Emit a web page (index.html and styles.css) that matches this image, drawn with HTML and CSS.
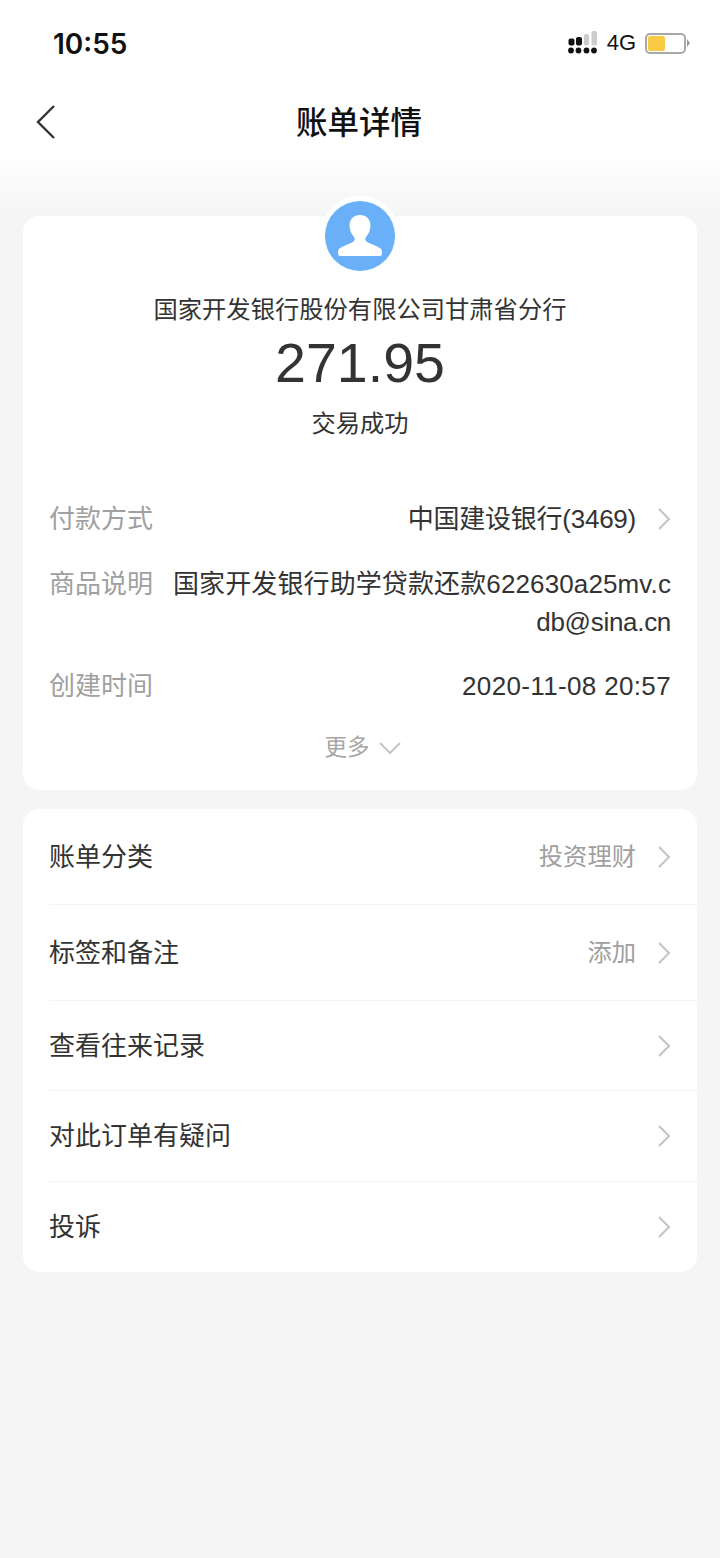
FILE: index.html
```html
<!DOCTYPE html>
<html lang="zh-CN">
<head>
  <meta charset="UTF-8">
  <meta name="viewport" content="width=device-width, initial-scale=1.0">
  <title>账单详情</title>
  <link rel="stylesheet" href="styles.css">
</head>
<body>
  <div class="status-bar">
    <span class="time">10:55</span>
    <div class="status-right">
      <svg class="signal" width="30" height="24" viewBox="0 0 30 24">
        <rect x="0.500" y="7.500" width="6" height="7" rx="2" fill="#111"/>
        <rect x="8" y="6" width="6" height="8.500" rx="2" fill="#111"/>
        <rect x="16" y="3" width="5" height="11.500" rx="2" fill="#ccc"/>
        <rect x="23.500" y="0" width="5.500" height="14.500" rx="2" fill="#ccc"/>
        <circle cx="3" cy="19.500" r="2.900" fill="#111"/>
        <circle cx="10.500" cy="19.500" r="2.900" fill="#111"/>
        <circle cx="18.500" cy="19.500" r="2.900" fill="#111"/>
        <circle cx="26" cy="19.500" r="2.900" fill="#111"/>
      </svg>
      <span class="net">4G</span>
      <div class="battery"><div class="battery-level"></div></div>
      <div class="battery-tip"></div>
    </div>
  </div>

  <div class="nav-bar">
    <svg class="back" width="22" height="36" viewBox="0 0 22 36">
      <path d="M19 2 L3 18 L19 34" fill="none" stroke="#333" stroke-width="2.400"/>
    </svg>
    <h1 class="nav-title">账单详情</h1>
  </div>

  <div class="card card-main">
    <div class="avatar">
      <svg width="70" height="70" viewBox="0 0 70 70">
        <circle cx="35" cy="35" r="35" fill="#6ab0f8"/>
        <path d="M35 14c-6.500 0-10.500 4.500-10.500 10.500 0 4.500 2 9 4.500 11.500 1 1.500 1 3.500-.5 4.500-3.500 2.500-10 4-14 7-1 1-1.500 2.500-1.500 5 0 1.500 1 2.500 2.500 2.500h39c1.500 0 2.500-1 2.500-2.500 0-2.500-.5-4-1.500-5-4-3-10.500-4.500-14-7-1.500-1-1.500-3-.5-4.500 2.500-2.500 4.500-7 4.500-11.500C45.500 18.500 41.500 14 35 14z" fill="#fff"/>
      </svg>
    </div>
    <div class="payee">国家开发银行股份有限公司甘肃省分行</div>
    <div class="amount">271.95</div>
    <div class="state">交易成功</div>

    <div class="detail-row detail-pay">
      <span class="detail-label">付款方式</span>
      <span class="detail-value detail-bank">中国建设银行(3469)</span>
      <svg class="chevron" width="14" height="24" viewBox="0 0 14 24"><path d="M2 2 L12 12 L2 22" fill="none" stroke="#c6c6c6" stroke-width="2.200"/></svg>
    </div>
    <div class="detail-row detail-desc">
      <span class="detail-label">商品说明</span>
      <span class="detail-value detail-long">国家开发银行助学贷款还款622630a25mv.c<span class="detail-tail">db@sina.cn</span></span>
    </div>
    <div class="detail-row detail-time">
      <span class="detail-label">创建时间</span>
      <span class="detail-value detail-date">2020-11-08 20:57</span>
    </div>
    <div class="more">
      <span>更多</span>
      <svg width="24" height="14" viewBox="0 0 24 14"><path d="M2 2 L12 12 L22 2" fill="none" stroke="#c6c6c6" stroke-width="2"/></svg>
    </div>
  </div>

  <div class="card card-list">
    <div class="list-row row-tall">
      <span class="row-title">账单分类</span>
      <span class="row-value">投资理财</span>
      <svg class="chevron" width="14" height="24" viewBox="0 0 14 24"><path d="M2 2 L12 12 L2 22" fill="none" stroke="#c6c6c6" stroke-width="2.200"/></svg>
    </div>
    <div class="list-row row-tall">
      <span class="row-title">标签和备注</span>
      <span class="row-value">添加</span>
      <svg class="chevron" width="14" height="24" viewBox="0 0 14 24"><path d="M2 2 L12 12 L2 22" fill="none" stroke="#c6c6c6" stroke-width="2.200"/></svg>
    </div>
    <div class="list-row">
      <span class="row-title">查看往来记录</span>
      <svg class="chevron" width="14" height="24" viewBox="0 0 14 24"><path d="M2 2 L12 12 L2 22" fill="none" stroke="#c6c6c6" stroke-width="2.200"/></svg>
    </div>
    <div class="list-row">
      <span class="row-title">对此订单有疑问</span>
      <svg class="chevron" width="14" height="24" viewBox="0 0 14 24"><path d="M2 2 L12 12 L2 22" fill="none" stroke="#c6c6c6" stroke-width="2.200"/></svg>
    </div>
    <div class="list-row">
      <span class="row-title">投诉</span>
      <svg class="chevron" width="14" height="24" viewBox="0 0 14 24"><path d="M2 2 L12 12 L2 22" fill="none" stroke="#c6c6c6" stroke-width="2.200"/></svg>
    </div>
  </div>
</body>
</html>
```

FILE: styles.css
```css
* {
  margin: 0;
  padding: 0;
  box-sizing: border-box;
}

html, body {
  height: 100%;
}

body {
  width: 720px;
  min-height: 1558px;
  overflow: hidden;
  background: linear-gradient(to bottom, #fff 0, #fff 150px, #f5f5f5 215px, #f5f5f5 100%);
  font-family: "Liberation Sans", "Noto Sans CJK SC", sans-serif;
  color: #333;
}

/* Status bar */
.status-bar {
  height: 86px;
  padding: 0 30px 0 53px;
  display: flex;
  align-items: center;
  justify-content: space-between;
}

.time {
  padding-top: 1px;
  font-family: Inter, "Liberation Sans", sans-serif;
  font-size: 28px;
  font-weight: 600;
  color: #111;
}

.status-right {
  display: flex;
  align-items: center;
}

.signal {
  margin-right: 9px;
}

.net {
  font-size: 22px;
  color: #111;
  margin-right: 9px;
}

.battery {
  width: 41px;
  height: 21px;
  border: 2px solid #a8a8a8;
  border-radius: 5px;
  padding: 1px;
}

.battery-level {
  width: 17px;
  height: 15px;
  background: #f9cb45;
  border-radius: 2px;
}

.battery-tip {
  width: 0;
  height: 0;
  margin-left: 1px;
  border-top: 4px solid transparent;
  border-bottom: 4px solid transparent;
  border-left: 3px solid #999;
}

/* Nav */
.nav-bar {
  height: 72px;
  padding: 0 2px 4px 0;
  position: relative;
  display: flex;
  align-items: center;
  justify-content: center;
}

.back {
  position: absolute;
  left: 35px;
  top: 18px;
}

.nav-title {
  font-size: 31.500px;
  font-weight: 500;
  color: #111;
}

/* Cards */
.card {
  margin: 0 23px;
  background: #fff;
  border-radius: 16px;
}

.card-main {
  margin-top: 58px;
  height: 574px;
  padding: 0 26px;
  position: relative;
  display: flex;
  flex-direction: column;
}

.avatar {
  position: absolute;
  left: 297px;
  top: -20px;
  width: 80px;
  height: 80px;
  padding: 5px;
  border-radius: 50%;
  background: #fff;
}

.payee {
  margin-top: 76px;
  height: 36px;
  line-height: 36px;
  text-align: center;
  font-size: 24.300px;
  color: #333;
}

.amount {
  height: 68px;
  line-height: 70px;
  text-align: center;
  font-size: 55.500px;
  color: #333;
}

.state {
  margin-top: 10px;
  height: 36px;
  line-height: 36px;
  text-align: center;
  font-size: 24.300px;
  color: #333;
}

.detail-row {
  display: flex;
  align-items: flex-start;
  font-size: 26px;
  line-height: 38px;
}

.detail-pay {
  margin-top: 58px;
  align-items: center;
}

.detail-desc {
  margin-top: 27px;
}

.detail-time {
  margin-top: 26px;
}

.detail-label {
  flex: none;
  width: 120px;
  color: #a0a0a0;
}

.detail-value {
  flex: 1;
  min-width: 0;
  text-align: right;
  color: #333;
}

.detail-bank {
  letter-spacing: -0.250px;
}

.detail-long {
  white-space: nowrap;
  letter-spacing: 0.120px;
}

.detail-tail {
  display: block;
  letter-spacing: -0.300px;
}

.detail-date {
  letter-spacing: 0.350px;
}

.chevron {
  flex: none;
  margin-left: 21px;
}

.more {
  margin-top: 25px;
  padding-left: 6px;
  display: flex;
  align-items: center;
  justify-content: center;
  gap: 8px;
  font-size: 22.500px;
  line-height: 36px;
  color: #a6a6a6;
}

.card-list {
  margin-top: 19px;
  padding-left: 26px;
}

.list-row {
  height: 90.250px;
  padding-right: 26px;
  display: flex;
  align-items: center;
  border-bottom: 1px solid #f3f3f3;
}

.list-row:last-child {
  height: 90px;
  border-bottom: none;
}

.row-tall {
  height: 96px;
}

.row-title {
  flex: 1;
  padding-bottom: 4px;
  font-size: 26px;
  color: #333;
}

.row-value {
  padding-bottom: 4px;
  font-size: 24.300px;
  color: #a0a0a0;
}
```
